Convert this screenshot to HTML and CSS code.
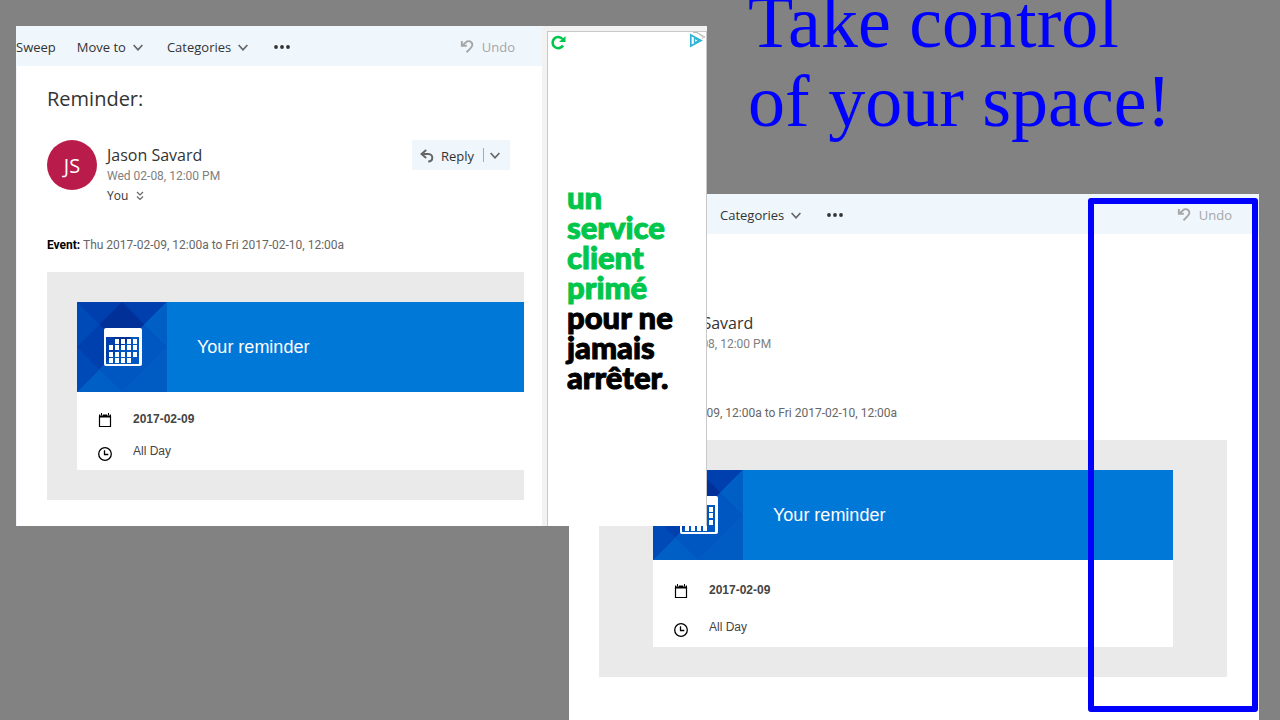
FILE: index.html
```html
<!DOCTYPE html>
<html lang="en">
<head>
<meta charset="utf-8">
<title>Take control of your space!</title>
<link rel="stylesheet" href="styles.css">
</head>
<body>
<svg class="sprite" aria-hidden="true">
  <symbol id="chevron" viewBox="0 0 10 7"><path d="M.6 1L5 5.800 9.400 1" fill="none" stroke="currentColor" stroke-width="1.700"/></symbol>
  <symbol id="undo" viewBox="0 0 14 14"><path d="M1.800 1v4.800h5M2 5.600L6 2.200C8.300 0 12.400 1.400 12.300 5C12.200 7.200 9.500 9.600 6.500 12.200" fill="none" stroke="currentColor" stroke-width="1.900"/></symbol>
  <symbol id="reply" viewBox="0 0 14 14"><path d="M6.200 1L1.500 5l4.700 4M2 5h6.500c5 0 5.200 7.500-.3 7.500" fill="none" stroke="currentColor" stroke-width="2"/></symbol>
  <symbol id="dots" viewBox="0 0 16 4"><circle cx="2" cy="2" r="1.900"/><circle cx="8" cy="2" r="1.900"/><circle cx="14" cy="2" r="1.900"/></symbol>
  <symbol id="day" viewBox="0 0 14 14"><path d="M1.500 3.500h11v10h-11z" fill="none" stroke="#000" stroke-width="1.200"/><path d="M1 1.500h12v3H1z"/><path d="M3.500 0v2.500M10.500 0v2.500" stroke="#fff" stroke-width="2.600"/><path d="M3.500 0v2.500M10.500 0v2.500" stroke="#000"/></symbol>
  <symbol id="clock" viewBox="0 0 14 14"><circle cx="7" cy="7" r="6.300" fill="none" stroke="#000" stroke-width="1.300"/><path d="M6.500 3.300v4.200h3.800" fill="none" stroke="#000" stroke-width="1.300"/></symbol>
  <symbol id="tile" viewBox="0 0 90 90">
    <path d="M0 0h90L0 90z" fill="#003fae"/>
    <path d="M90 0v90H0z" fill="#005fc4"/>
    <path d="M0 0l22.500 22.500L0 45zM0 45l22.500 22.500L0 90z" fill="#004ab8"/>
    <path d="M45 0l22.500 22.500L45 45 22.500 22.500z" fill="#003098"/>
    <path d="M67.500 22.500L90 45 67.500 67.500 45 45zM45 45l22.500 22.500L45 90 22.500 67.500z" fill="#0057c1"/>
    <path d="M67.500 67.500L90 90V45zM45 90l22.500-22.500L90 90z" fill="#005cc2"/>
    <path d="M29 26h34a2 2 0 0 1 2 2v34a2 2 0 0 1-2 2H29a2 2 0 0 1-2-2V28a2 2 0 0 1 2-2zM29 35v27h33V35z" fill="#fff" fill-rule="evenodd"/>
    <path d="M38 37h4v5h-4zM44 37h4v5h-4zM50 37h4v5h-4zM56 37h4v5h-4zM32 43h4v5h-4zM38 43h4v5h-4zM44 43h4v5h-4zM50 43h4v5h-4zM56 43h4v5h-4zM32 50h4v5h-4zM38 50h4v5h-4zM44 50h4v5h-4zM50 50h4v5h-4zM56 50h4v5h-4zM32 56h4v5h-4zM38 56h4v5h-4zM44 56h4v5h-4zM50 56h4v5h-4z" fill="#fff"/>
  </symbol>
</svg>
<main class="canvas">
  <h1 class="headline">Take control<br>of your space!</h1>

  <section class="window window-after" aria-label="Mail with the full width">
    <div class="mail">
      <div class="toolbar">
        <button class="tool">Categories <svg class="chevron"><use href="#chevron"/></svg></button>
        <button class="tool more" aria-label="More"><svg class="dots"><use href="#dots"/></svg></button>
        <button class="tool undo" disabled><svg class="tool-icon"><use href="#undo"/></svg>Undo</button>
      </div>
      <article class="message">
        <header class="sender">
          <div class="who">
            <div class="name">Jason Savard</div>
            <div class="date">Wed 02-08, 12:00 PM</div>
          </div>
        </header>
        <p class="event">Thu 2017-02-09, 12:00a to Fri 2017-02-10, 12:00a</p>
        <div class="frame">
          <div class="card">
            <div class="banner"><svg class="tile"><use href="#tile"/></svg><h2 class="banner-title">Your reminder</h2></div>
            <ul class="details">
              <li class="detail"><svg class="detail-icon"><use href="#day"/></svg><strong>2017-02-09</strong></li>
              <li class="detail"><svg class="detail-icon detail-clock"><use href="#clock"/></svg>All Day</li>
            </ul>
          </div>
        </div>
      </article>
    </div>
  </section>

  <section class="window window-before" aria-label="Mail with an advert">
    <div class="mail">
      <div class="toolbar">
        <button class="tool">Sweep</button>
        <button class="tool">Move to <svg class="chevron"><use href="#chevron"/></svg></button>
        <button class="tool">Categories <svg class="chevron"><use href="#chevron"/></svg></button>
        <button class="tool more" aria-label="More"><svg class="dots"><use href="#dots"/></svg></button>
        <button class="tool undo" disabled><svg class="tool-icon"><use href="#undo"/></svg>Undo</button>
      </div>
      <article class="message">
        <h2 class="subject">Reminder:</h2>
        <header class="sender">
          <div class="avatar">JS</div>
          <div class="who">
            <div class="name">Jason Savard</div>
            <div class="date">Wed 02-08, 12:00 PM</div>
            <div class="to">You <svg class="expand" viewBox="0 0 8 10"><path d="M1 1l3 3 3-3M1 5.500l3 3 3-3" fill="none" stroke="currentColor" stroke-width="1.200"/></svg></div>
          </div>
          <div class="reply">
            <button class="reply-main"><svg class="tool-icon"><use href="#reply"/></svg>Reply</button>
            <button class="reply-menu" aria-label="Reply options"><svg class="chevron"><use href="#chevron"/></svg></button>
          </div>
        </header>
        <p class="event"><b class="event-label">Event:</b> Thu 2017-02-09, 12:00a to Fri 2017-02-10, 12:00a</p>
        <div class="frame">
          <div class="card">
            <div class="banner"><svg class="tile"><use href="#tile"/></svg><h2 class="banner-title">Your reminder</h2></div>
            <ul class="details">
              <li class="detail"><svg class="detail-icon"><use href="#day"/></svg><strong>2017-02-09</strong></li>
              <li class="detail"><svg class="detail-icon detail-clock"><use href="#clock"/></svg>All Day</li>
            </ul>
          </div>
        </div>
      </article>
    </div>
    <aside class="ad">
      <div class="ad-bar">
        <svg class="refresh" viewBox="0 0 15 15"><path d="M12 10.500A5.600 5.600 0 1 1 11.500 4" fill="none" stroke="#00c64b" stroke-width="2.600"/><path d="M14.500 1v6H8z" fill="#00c64b"/></svg>
        <svg class="choices" viewBox="0 0 17 16"><path d="M4 .5h4L16 5l-3 1.500M8 .5L14 5" fill="none" stroke="#bbb"/><path d="M1.800 3L12 8.500 1.800 14z" fill="#fff" stroke="#2fb3d4" stroke-width="1.700"/><path d="M5.500 6v5M5.500 6l4 2.500-4 2.500" fill="none" stroke="#2fb3d4" stroke-width="1.300"/></svg>
      </div>
      <p class="slogan" lang="fr"><span class="slogan-green">un<br>service<br>client<br>primé</span><br>pour ne<br>jamais<br>arrêter.</p>
    </aside>
  </section>

  <div class="highlight"></div>
</main>
</body>
</html>
```
FILE: styles.css
```css
* { box-sizing: border-box; }
body {
  margin: 0;
  background: #828282;
  color: #333;
  font-family: "Open Sans", "Noto Sans", sans-serif;
  font-size: 13px;
  line-height: 20px;
}
h1, h2, p, ul { margin: 0; padding: 0; font-weight: 400; }
button {
  padding: 0;
  border: 0;
  background: none;
  color: inherit;
  font: inherit;
}
.sprite { position: absolute; width: 0; height: 0; }
.canvas { position: relative; min-height: 100vh; overflow: hidden; }

.headline {
  position: absolute;
  left: 748px;
  top: -17px;
  color: #00f;
  font-family: "Liberation Serif", serif;
  font-size: 74px;
  line-height: 79px;
  white-space: nowrap;
}

/* Windows lying on the canvas */
.window { position: absolute; display: flex; background: #fff; overflow: hidden; }
.window-before { left: 16px; right: 573px; top: 26px; }
.window-after { left: 569px; right: 21px; top: 194px; bottom: 0; }
.mail { flex: 1; min-width: 0; }
.window-before .mail { border-left: 1px solid #f0f4f8; }

.toolbar {
  display: flex;
  align-items: center;
  gap: 21px;
  height: 40px;
  padding: 2px 27px 0 0;
  background: #eff6fc;
}
.window-before .toolbar { margin-left: -1px; }
.window-after .toolbar { padding-left: 151px; }
.tool { display: flex; align-items: center; gap: 7px; white-space: nowrap; }
.tool .chevron { margin-right: 3px; }
.chevron { width: 10px; height: 7px; color: #666; }
.more { margin-left: 2px; }
.dots { width: 16px; height: 4px; fill: #333; }
.tool-icon { width: 14px; height: 14px; color: #666; }
.undo { margin-left: auto; gap: 8px; color: #a6a6a6; }
.undo .tool-icon { color: #a6a6a6; }

.message { padding: 18px 18px 26px 30px; }
.window-after .message { padding: 74px 32px 42px 30px; }
.subject { height: 56px; font-size: 20px; line-height: 30px; }
.sender { display: flex; align-items: flex-start; height: 95px; }
.avatar {
  width: 50px;
  height: 50px;
  padding-top: 1px;
  border-radius: 50%;
  background: #b91c4a;
  color: #fff;
  font-size: 20px;
  line-height: 50px;
  text-align: center;
}
.who { flex: 1; padding: 5px 0 0 10px; }
.window-after .who { padding-left: 59px; }
.name { font-size: 16px; line-height: 21px; }
.date, .event { font-family: Roboto, sans-serif; font-size: 12px; }
.date { color: #808080; }
.to { display: flex; align-items: center; gap: 8px; font-size: 12px; }
.expand { width: 8px; height: 10px; color: #666; }
.reply {
  display: flex;
  align-items: center;
  height: 30px;
  margin-right: 14px;
  padding: 0 10px 0 8px;
  background: #eff6fc;
}
.reply-main { display: flex; align-items: center; gap: 7px; height: 30px; padding-top: 2px; }
.reply-menu {
  display: flex;
  align-items: center;
  height: 14px;
  margin-left: 9px;
  padding-left: 6px;
  border-left: 1px solid #aaa;
}
.event { height: 37px; color: #666; white-space: nowrap; }
.window-after .event { padding-left: 37px; }
.event-label { color: #000; }

.frame { padding: 30px 0 30px 30px; background: #eaeaea; }
.window-after .frame { padding: 30px 54px; }
.card { background: #fff; }
.banner { display: flex; align-items: center; background: #0078d7; }
.tile { width: 90px; height: 90px; }
.banner-title {
  padding-left: 30px;
  color: #fff;
  font-family: "Liberation Sans", sans-serif;
  font-size: 18px;
}
.details {
  display: grid;
  gap: 12px;
  padding: 17px 21px 9px;
  list-style: none;
  color: #444;
  font-family: "Liberation Sans", sans-serif;
  font-size: 12px;
}
.window-after .details { gap: 17px; padding: 20px 21px 10px; }
.detail { display: flex; align-items: flex-start; gap: 21px; height: 20px; }
.detail-icon { width: 14px; height: 14px; margin-top: 4px; }
.detail-clock { margin-top: 6px; }

/* Advert column */
.ad {
  display: flex;
  flex-direction: column;
  width: 165px;
  border-top: 5px solid #f2f2f2;
  border-left: 5px solid #f2f2f2;
  box-shadow: inset 1px 1px #c8c8c8, inset -1px 0 #c8c8c8;
}
.ad-bar { display: flex; justify-content: space-between; padding: 1px 1px 0 4px; }
.refresh { width: 15px; height: 15px; margin-top: 3px; }
.choices { width: 17px; height: 16px; }
.slogan {
  padding: 132px 0 0 20px;
  color: #000;
  font-family: Lato, sans-serif;
  font-size: 31px;
  font-weight: 900;
  line-height: 30px;
  white-space: nowrap;
  -webkit-text-stroke: 1px currentColor;
}
.slogan-green { color: #00c64b; }

/* Marks the freed area */
.highlight {
  position: absolute;
  left: 1088px;
  right: 22px;
  top: 198px;
  bottom: 8px;
  border: 6px solid #00f;
  border-radius: 3px;
}
```
